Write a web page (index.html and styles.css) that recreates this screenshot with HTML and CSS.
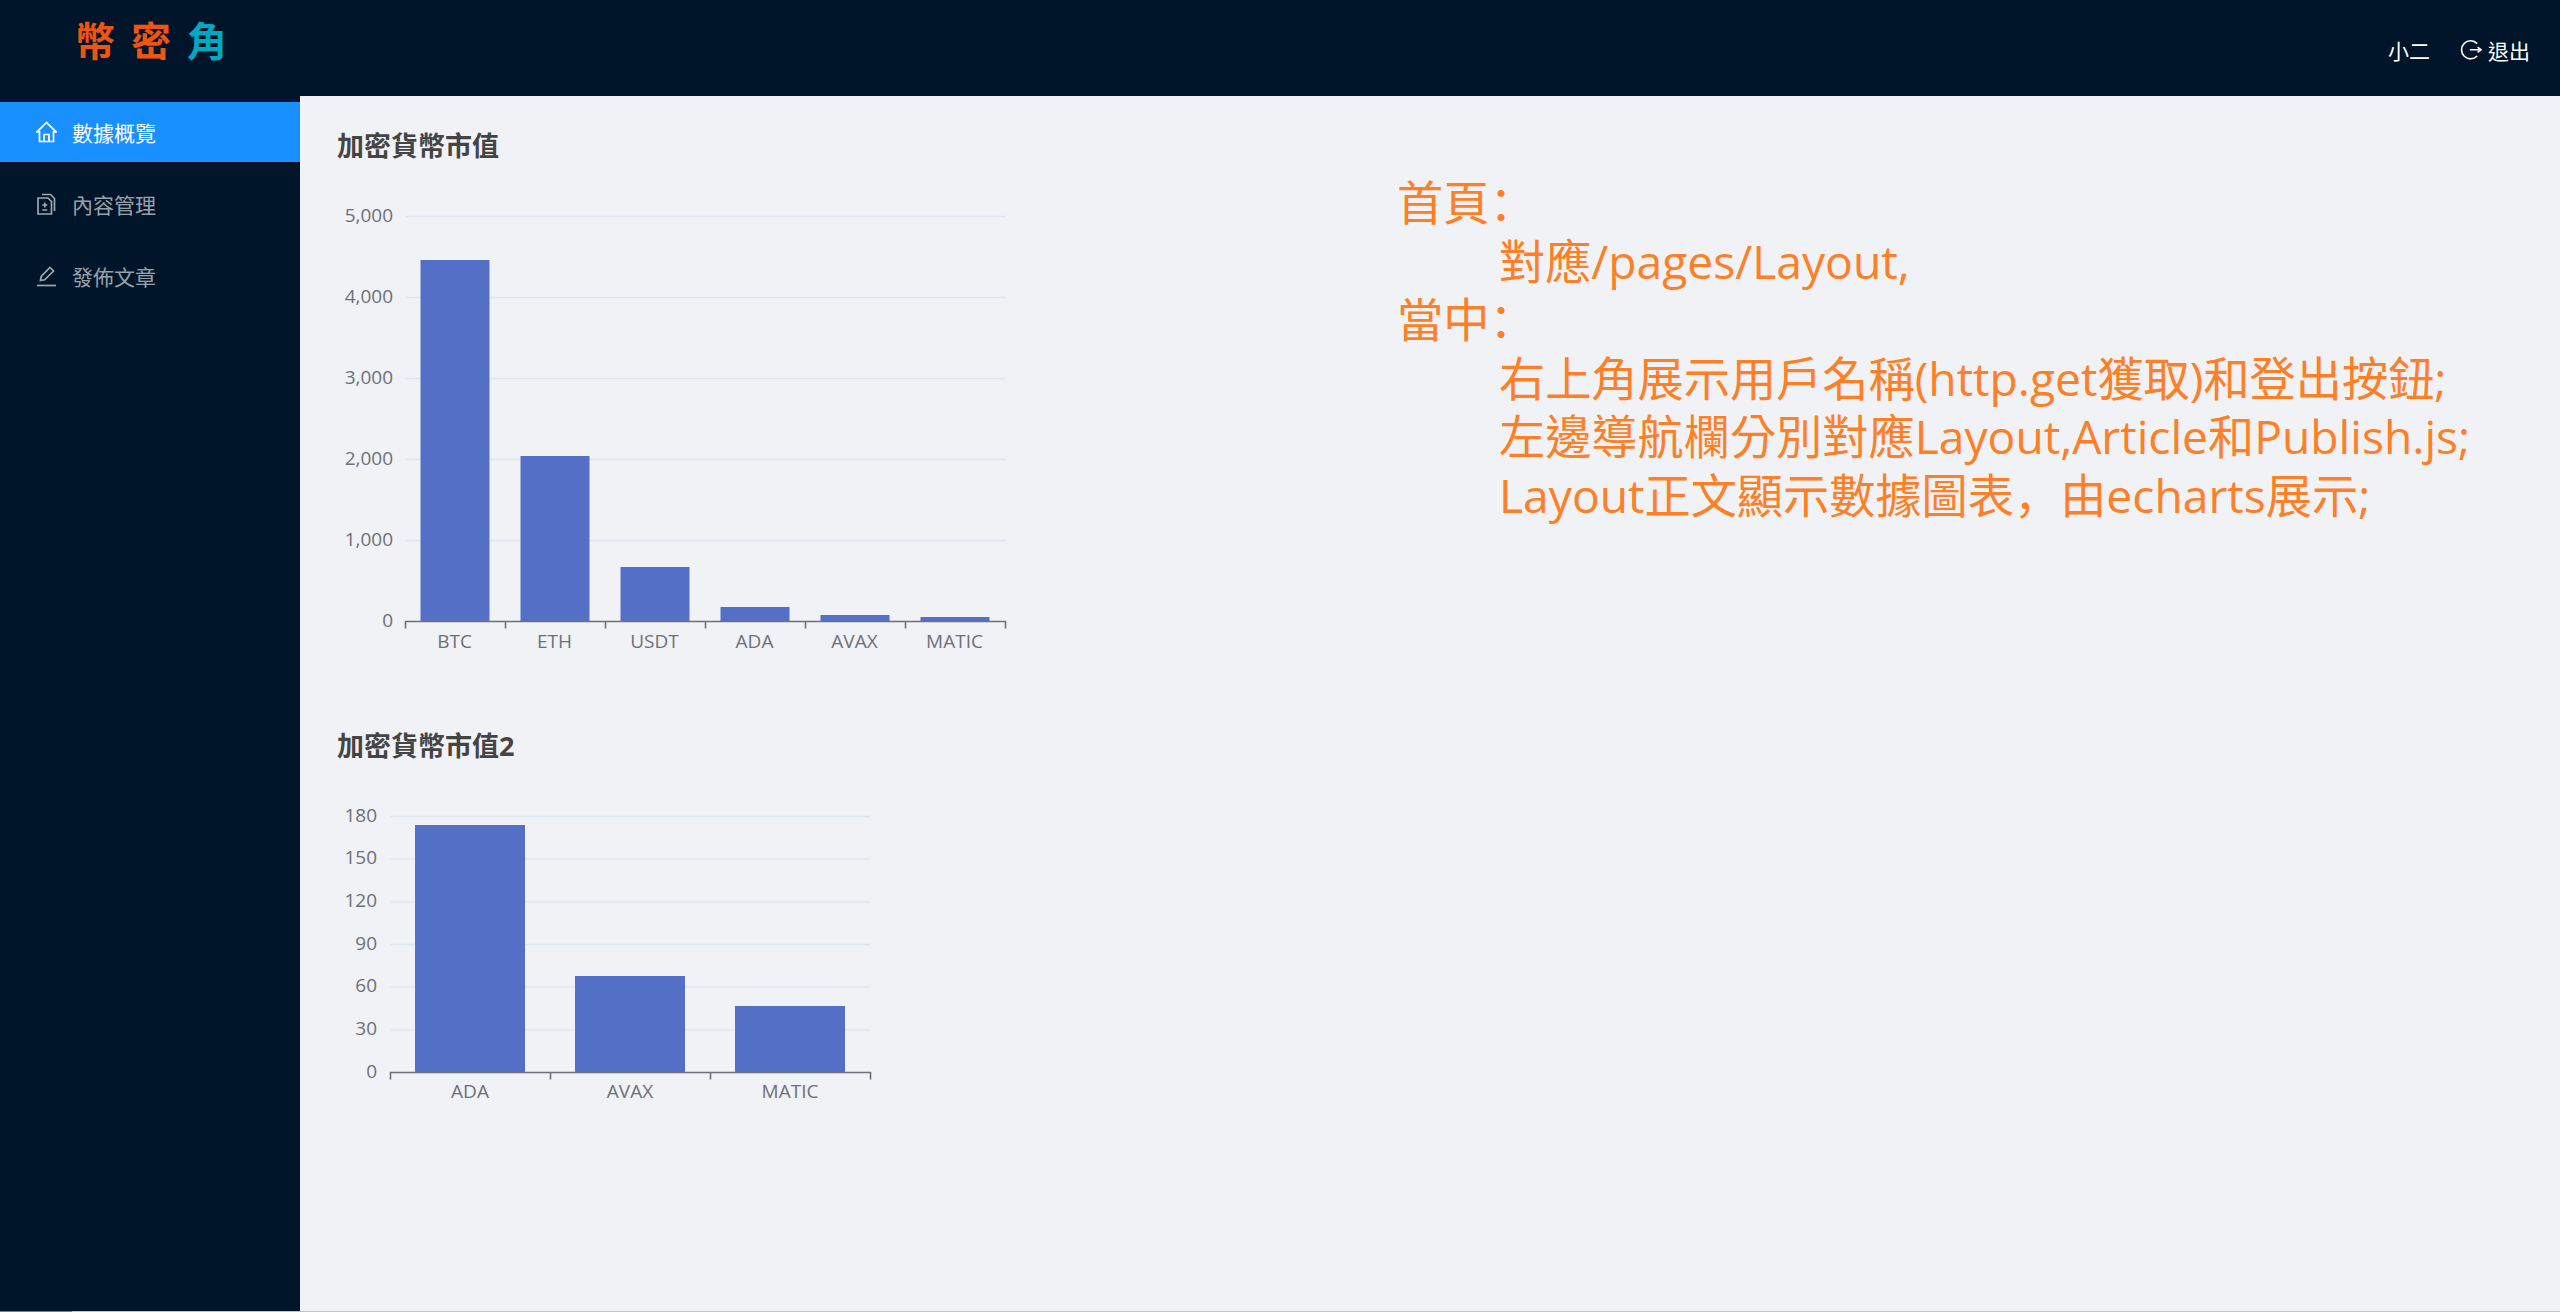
FILE: index.html
```html
<!DOCTYPE html>
<html lang="zh-Hant">
  <head>
    <meta charset="UTF-8" />
    <meta name="viewport" content="width=device-width, initial-scale=1.0" />
    <title>幣密角</title>
    <link rel="stylesheet" href="styles.css">
  </head>
  <body>
    <div class="layout">
      <header class="header">
        <div class="logo">
          <span class="logo-orange">幣</span>
          <span class="logo-orange">密</span>
          <span class="logo-teal">角</span>
        </div>
        <div class="user-info">
          <span>小二</span>
          <span class="logout">
            <svg class="logout-icon" viewBox="0 0 20 20">
              <path d="M15.6 4.2A8.2 8.2 0 1 0 15.6 15.4" />
              <path d="M9 9.8H19M16 7.4L19 9.8L16 12.2" />
            </svg>
            退出
          </span>
        </div>
      </header>
      <div class="main">
        <nav class="sider">
          <ul class="menu">
            <li class="menu-item active">
              <svg class="menu-icon" viewBox="0 0 21 22">
                <path d="M10.5 1.5L1 10.8H3.5V20.5H17.5V10.8H20Z" />
                <path d="M8 20.5V13.5H13V20.5" />
              </svg>
              數據概覽
            </li>
            <li class="menu-item">
              <svg class="menu-icon" viewBox="0 0 21 22">
                <path d="M2 5H12L15.5 8.5V21H2Z" />
                <path d="M6 1.5H14.5L18.5 5.5V18" />
                <path d="M8.8 9.5V14.5M6.3 12H11.3M6.3 17H11.3" />
              </svg>
              內容管理
            </li>
            <li class="menu-item">
              <svg class="menu-icon" viewBox="0 0 21 22">
                <path d="M1 20.5H20" />
                <path d="M4.5 15.5L5.2 11.3L14 2.5L17.5 6L8.7 14.8Z" />
              </svg>
              發佈文章
            </li>
          </ul>
        </nav>
        <main class="content">
          <section class="charts">
            <h2 class="chart-title chart-title-first">加密貨幣市值</h2>
            <svg class="chart chart-one" viewBox="0 0 680 490">
              <path class="grid-line" d="M68.5 41.5H668.5M68.5 122.5H668.5M68.5 203.5H668.5M68.5 284.5H668.5M68.5 365.5H668.5" />
              <rect class="bar" x="83.5" y="85" width="69" height="361" />
              <rect class="bar" x="183.5" y="281" width="69" height="165" />
              <rect class="bar" x="283.5" y="392" width="69" height="54" />
              <rect class="bar" x="383.5" y="432" width="69" height="14" />
              <rect class="bar" x="483.5" y="440" width="69" height="6" />
              <rect class="bar" x="583.5" y="442" width="69" height="4" />
              <path class="axis-line" d="M68.5 453.5V446.5H668.5V453.5M168.5 446.5V453.5M268.5 446.5V453.5M368.5 446.5V453.5M468.5 446.5V453.5M568.5 446.5V453.5" />
              <g class="y-labels">
                <text x="56" y="47">5,000</text>
                <text x="56" y="128">4,000</text>
                <text x="56" y="209">3,000</text>
                <text x="56" y="290">2,000</text>
                <text x="56" y="371">1,000</text>
                <text x="56" y="452">0</text>
              </g>
              <g class="x-labels">
                <text x="117.5" y="473">BTC</text>
                <text x="217.5" y="473">ETH</text>
                <text x="317.5" y="473">USDT</text>
                <text x="417.5" y="473">ADA</text>
                <text x="517.5" y="473">AVAX</text>
                <text x="617.5" y="473">MATIC</text>
              </g>
            </svg>
            <h2 class="chart-title">加密貨幣市值2</h2>
            <svg class="chart chart-two" viewBox="0 0 560 340">
              <path class="grid-line" d="M53.5 40.5H533.5M53.5 83H533.5M53.5 126H533.5M53.5 168.5H533.5M53.5 211H533.5M53.5 254H533.5" />
              <rect class="bar" x="78" y="49" width="110" height="247" />
              <rect class="bar" x="238" y="200" width="110" height="96" />
              <rect class="bar" x="398" y="230" width="110" height="66" />
              <path class="axis-line" d="M53.5 303.5V296.5H533.5V303.5M213.5 296.5V303.5M373.5 296.5V303.5" />
              <g class="y-labels">
                <text x="40" y="46">180</text>
                <text x="40" y="88">150</text>
                <text x="40" y="131">120</text>
                <text x="40" y="174">90</text>
                <text x="40" y="216">60</text>
                <text x="40" y="259">30</text>
                <text x="40" y="302">0</text>
              </g>
              <g class="x-labels">
                <text x="133" y="322">ADA</text>
                <text x="293" y="322">AVAX</text>
                <text x="453" y="322">MATIC</text>
              </g>
            </svg>
          </section>
          <section class="notes">
            <div>首頁<span lang="zh-Hans">：</span></div>
            <div class="note-indent">對應/pages/Layout,</div>
            <div>當中<span lang="zh-Hans">：</span></div>
            <div class="note-indent">右上角展示用戶名稱(http.get獲取)和登出按鈕;</div>
            <div class="note-indent">左邊導航欄分別對應Layout,Article和Publish.js;</div>
            <div class="note-indent">Layout正文顯示數據圖表<span lang="zh-Hans">，</span>由echarts展示;</div>
          </section>
        </main>
      </div>
      <div class="status-line"><div class="status-progress"></div></div>
    </div>
  </body>
</html>
```

FILE: styles.css
```css
body {
  margin: 0;
  font-family: "Open Sans", "Noto Sans CJK TC", sans-serif;
  background-color: #f0f2f5;
}

.layout {
  display: flex;
  flex-direction: column;
  height: 100vh;
  overflow: hidden;
}

.header {
  display: flex;
  justify-content: space-between;
  align-items: center;
  flex: none;
  height: 96px;
  padding: 0 30px 0 75px;
  background-color: #001529;
}

.logo {
  display: flex;
  gap: 16px;
  padding-bottom: 14px;
  font-size: 40px;
  font-weight: 700;
  line-height: 44px;
}

.logo-orange {
  color: #ee5412;
}

.logo-teal {
  color: #00a8c4;
}

.user-info {
  display: flex;
  align-items: center;
  gap: 30px;
  padding-top: 4px;
  color: #fff;
  font-size: 21px;
}

.logout {
  display: flex;
  align-items: center;
  gap: 6px;
}

.logout-icon {
  width: 22px;
  height: 22px;
  fill: none;
  stroke: #fff;
  stroke-width: 1.5;
}

.main {
  display: flex;
  flex: 1;
  min-height: 0;
}

.sider {
  flex: none;
  width: 300px;
  background-color: #001529;
}

.menu {
  margin: 0;
  padding: 6px 0 0;
  list-style: none;
}

.menu-item {
  display: flex;
  align-items: center;
  gap: 15px;
  height: 60px;
  margin-bottom: 12px;
  padding-left: 36px;
  color: rgba(255, 255, 255, 0.62);
  font-size: 21px;
}

.menu-item.active {
  background-color: #1890ff;
  color: #fff;
}

.menu-icon {
  flex: none;
  width: 21px;
  height: 22px;
  fill: none;
  stroke: currentColor;
  stroke-width: 1.7;
}

.content {
  display: grid;
  grid-template-columns: 1060px 1fr;
  flex: 1;
  padding: 29px 0 0 37px;
  background-color: #f0f2f5;
}

.chart-title {
  margin: 0 0 10px;
  color: #444;
  font-size: 27px;
  font-weight: 700;
  line-height: 40px;
}

.chart-title-first {
  padding-top: 1px;
  margin-bottom: 9px;
}

.chart {
  display: block;
}

.chart-one {
  width: 680px;
  height: 490px;
  margin-bottom: 61px;
}

.chart-two {
  width: 560px;
  height: 340px;
}

.grid-line {
  fill: none;
  stroke: #e0e6f1;
  stroke-width: 1.6;
}

.axis-line {
  fill: none;
  stroke: #6e7079;
  stroke-width: 1.6;
}

.bar {
  fill: #5470c6;
}

.y-labels text,
.x-labels text {
  fill: #6e7079;
  font-size: 19px;
}

.y-labels text {
  text-anchor: end;
}

.x-labels text {
  text-anchor: middle;
}

.notes {
  margin-top: 49px;
  color: #ff7f27;
  font-size: 46.2px;
  line-height: 58.5px;
  white-space: nowrap;
}

.note-indent {
  padding-left: 102px;
}

.status-line {
  flex: none;
  height: 1px;
  background-color: #c4c4c4;
}

.status-progress {
  width: 72px;
  height: 1px;
  background-color: #5a8f72;
}
```
